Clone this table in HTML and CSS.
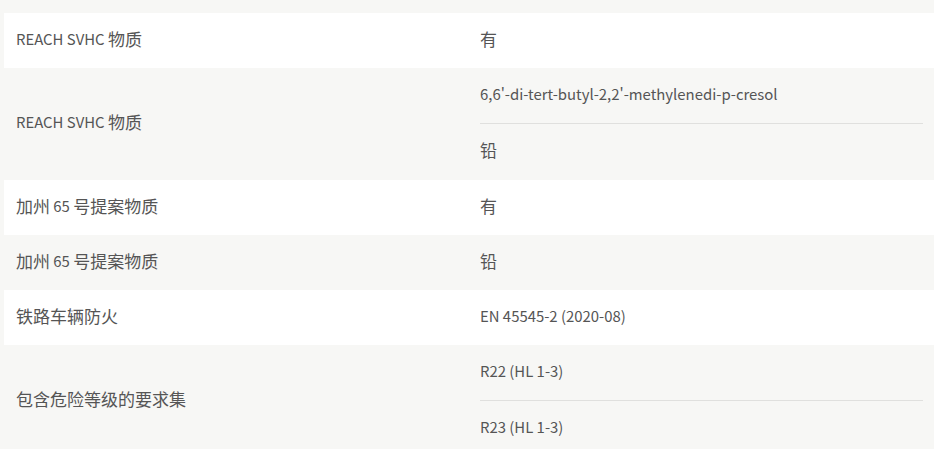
FILE: index.html
```html
<!DOCTYPE html>
<html lang="zh">
<head>
<meta charset="utf-8">
<link rel="stylesheet" href="styles.css">
</head>
<body>
<div class="table">
  <div class="row">
    <div class="label"><span class="lat">REACH SVHC </span>物质</div>
    <div class="values"><div class="value">有</div></div>
  </div>
  <div class="row">
    <div class="label"><span class="lat">REACH SVHC </span>物质</div>
    <div class="values">
      <div class="value"><span class="lat">6,6'-di-tert-butyl-2,2'-methylenedi-p-cresol</span></div>
      <div class="value">铅</div>
    </div>
  </div>
  <div class="row">
    <div class="label">加州<span class="lat"> 65 </span>号提案物质</div>
    <div class="values"><div class="value">有</div></div>
  </div>
  <div class="row">
    <div class="label">加州<span class="lat"> 65 </span>号提案物质</div>
    <div class="values"><div class="value">铅</div></div>
  </div>
  <div class="row">
    <div class="label">铁路车辆防火</div>
    <div class="values"><div class="value"><span class="lat">EN 45545-2 (2020-08)</span></div></div>
  </div>
  <div class="row">
    <div class="label">包含危险等级的要求集</div>
    <div class="values">
      <div class="value"><span class="lat">R22 (HL 1-3)</span></div>
      <div class="value"><span class="lat">R23 (HL 1-3)</span></div>
    </div>
  </div>
</div>
</body>
</html>
```
FILE: styles.css
```css
html, body {
  margin: 0;
  padding: 0;
  background: #f7f7f5;
}
body {
  font-family: "Noto Sans CJK SC", "Noto Sans", sans-serif;
  font-size: 17px;
  color: #555555;
}
.lat {
  font-size: 14.9px;
}
.table {
  padding: 13px 0 0 4px;
}
.row {
  display: grid;
  grid-template-columns: 1fr 1fr;
  background: #f7f7f5;
}
.row:nth-child(odd) {
  background: #ffffff;
}
.label {
  display: flex;
  align-items: center;
  padding: 0 12px 4px 12px;
  white-space: pre;
  line-height: 20px;
}
.values {
  display: flex;
  flex-direction: column;
  padding: 0 11px;
}
.value {
  box-sizing: border-box;
  height: 56px;
  padding-bottom: 4px;
  display: flex;
  align-items: center;
  line-height: 20px;
  border-bottom: 1px solid #e0e0de;
}
.value:last-child {
  border-bottom-color: transparent;
}
.value:only-child {
  height: 55px;
  border-bottom: none;
}
```
